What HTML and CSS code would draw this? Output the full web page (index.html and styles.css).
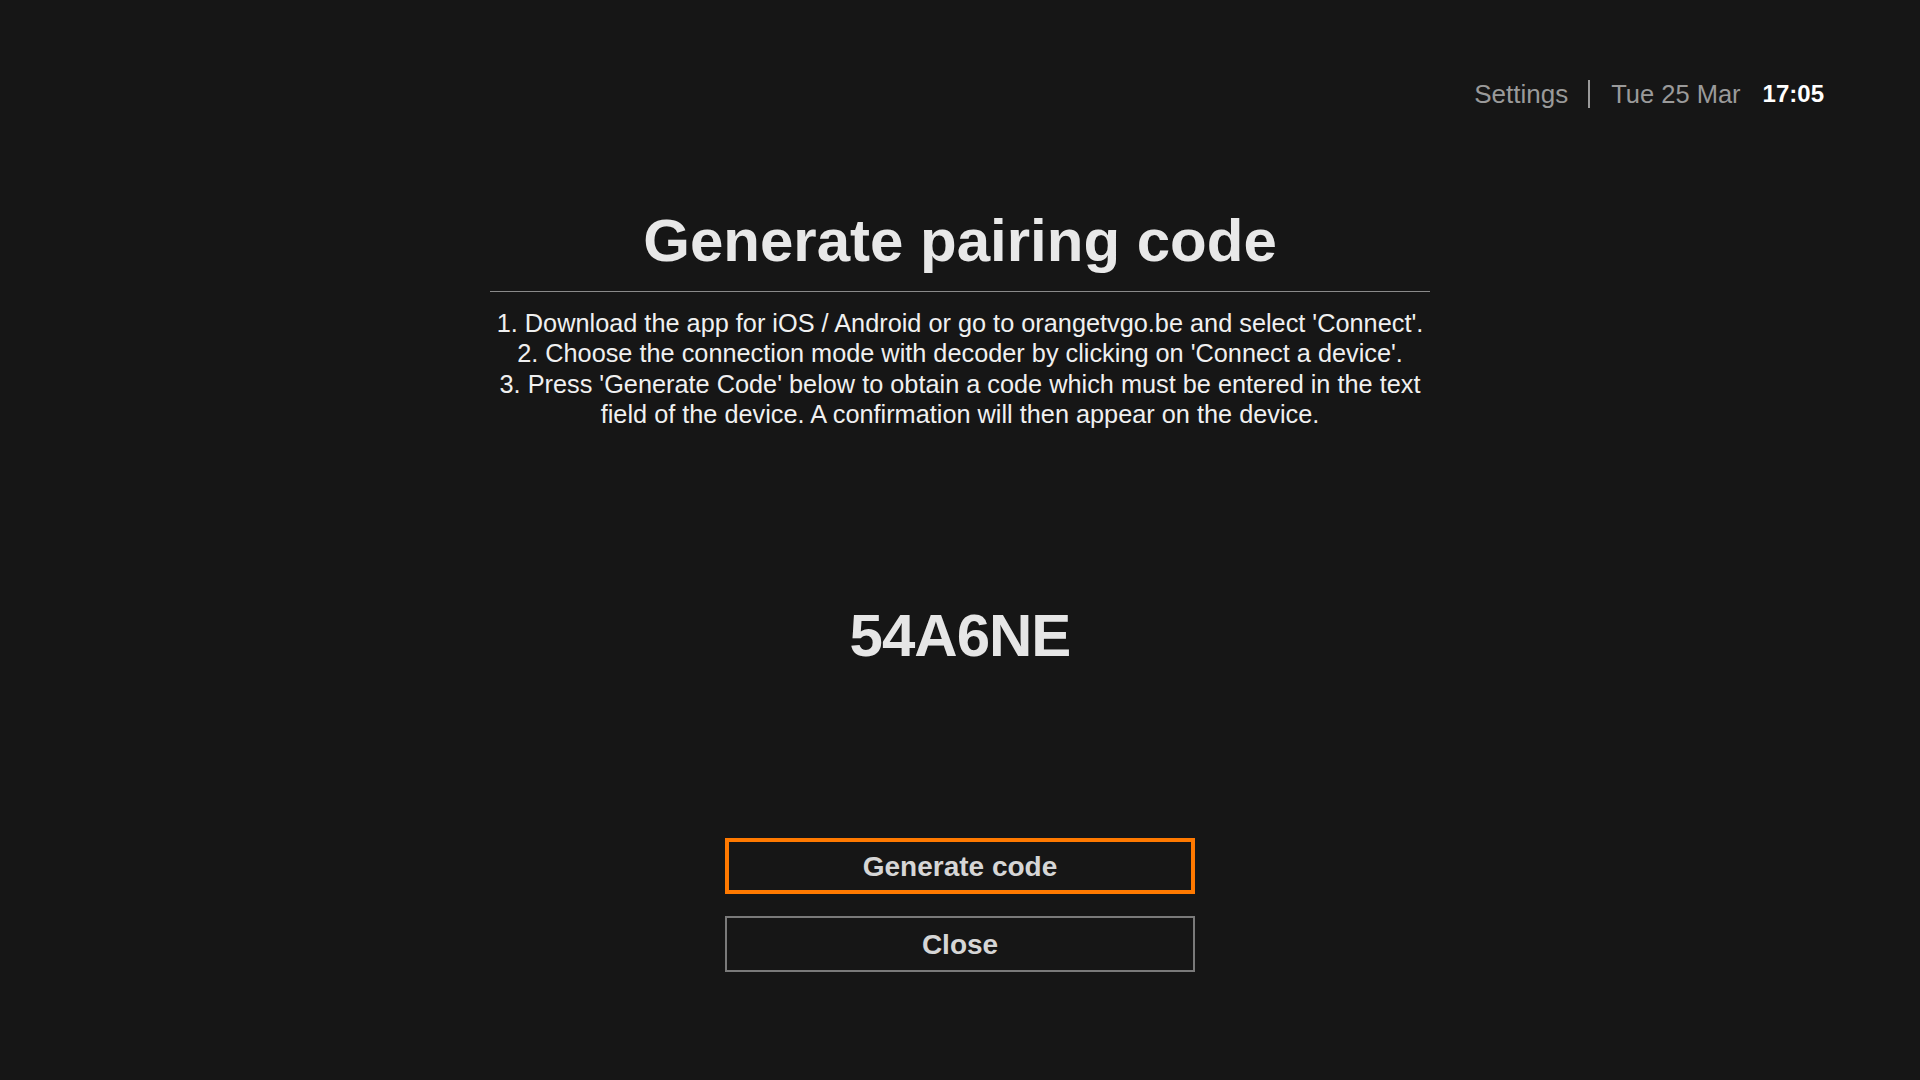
FILE: index.html
```html
<!DOCTYPE html>
<html lang="en">
<head>
<meta charset="utf-8">
<title>Generate pairing code</title>
<link rel="stylesheet" href="styles.css">
</head>
<body>
<div class="screen">
  <header class="topbar">
    <span class="topbar-item">Settings</span>
    <span class="topbar-sep"></span>
    <span class="topbar-item topbar-date">Tue 25 Mar</span>
    <span class="topbar-time">17:05</span>
  </header>

  <main class="dialog">
    <h1 class="dialog-title">Generate pairing code</h1>
    <div class="instructions">
      <p class="step">1. Download the app for iOS / Android or go to orangetvgo.be and select 'Connect'.</p>
      <p class="step">2. Choose the connection mode with decoder by clicking on 'Connect a device'.</p>
      <p class="step">3. Press 'Generate Code' below to obtain a code which must be entered in the text field of the device. A confirmation will then appear on the device.</p>
    </div>
    <div class="pair-code">54A6NE</div>
    <div class="actions">
      <button class="btn btn-focused">Generate code</button>
      <button class="btn">Close</button>
    </div>
  </main>
</div>
</body>
</html>
```
FILE: styles.css
```css
html, body {
  margin: 0;
  padding: 0;
  background: #161616;
}

body {
  font-family: "Liberation Sans", Arial, Helvetica, sans-serif;
  color: #e8e8e8;
  width: 1920px;
  height: 1080px;
  overflow: hidden;
}

.screen {
  display: flex;
  flex-direction: column;
  height: 1080px;
}

.topbar {
  display: flex;
  justify-content: flex-end;
  align-items: center;
  padding: 79px 96px 0 0;
  height: 30px;
  line-height: 30px;
  font-size: 26px;
}

.topbar-item {
  color: #9a9a9a;
}

.topbar-date {
  font-size: 25.5px;
}

.topbar-sep {
  width: 2px;
  height: 28px;
  background: #9a9a9a;
  margin: 0 21px 0 20px;
}

.topbar-time {
  color: #ffffff;
  font-weight: bold;
  font-size: 24px;
  margin-left: 22px;
}

.dialog {
  display: flex;
  flex-direction: column;
  align-items: center;
  margin-top: 97px;
}

.dialog-title {
  margin: 0;
  width: 940px;
  text-align: center;
  font-size: 60px;
  line-height: 70px;
  font-weight: bold;
  color: #e8e8e8;
  padding-bottom: 15px;
  border-bottom: 1px solid #8a8a8a;
}

.instructions {
  width: 940px;
  margin-top: 16px;
  text-align: center;
  font-size: 25.3px;
  line-height: 30.3px;
  color: #f0f0f0;
}

.step {
  margin: 0;
}

.pair-code {
  margin-top: 172px;
  font-size: 60px;
  line-height: 70px;
  font-weight: bold;
  letter-spacing: -1px;
  color: #e6e6e6;
}

.actions {
  margin-top: 167px;
  display: flex;
  flex-direction: column;
  gap: 22px;
}

.btn {
  box-sizing: border-box;
  width: 470px;
  height: 56px;
  background: transparent;
  border: 2px solid #7a7a7a;
  color: #d6d6d6;
  font-family: "Liberation Sans", Arial, Helvetica, sans-serif;
  font-size: 28px;
  font-weight: bold;
  padding: 2px 0 0 0;
}

.btn-focused {
  border: 4px solid #ff7900;
}
```
